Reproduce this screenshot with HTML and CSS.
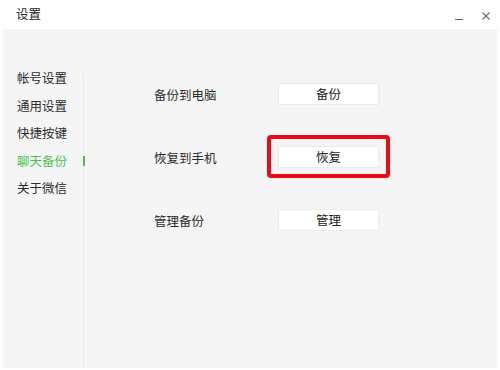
FILE: index.html
```html
<!DOCTYPE html>
<html lang="zh-CN">
<head>
<meta charset="utf-8">
<title>设置</title>
<link rel="stylesheet" href="styles.css">
</head>
<body>
<div class="window">
  <header class="titlebar">
    <span class="title">设置</span>
    <div class="controls">
      <svg class="ctl min" width="10" height="10" viewBox="0 0 10 10"><line x1="1" y1="8.5" x2="9" y2="8.5" stroke="#6a6a6a" stroke-width="1"/></svg>
      <svg class="ctl close" width="10" height="10" viewBox="0 0 10 10"><path d="M1.5 1.5 L8.5 8.5 M8.5 1.5 L1.5 8.5" stroke="#6a6a6a" stroke-width="1.1" fill="none"/></svg>
    </div>
  </header>
  <main class="panel">
    <nav class="sidebar">
      <div class="nav-item">帐号设置</div>
      <div class="nav-item">通用设置</div>
      <div class="nav-item">快捷按键</div>
      <div class="nav-item active">聊天备份<span class="marker"></span></div>
      <div class="nav-item">关于微信</div>
    </nav>
    <div class="divider"></div>
    <section class="content">
      <div class="row">
        <span class="label">备份到电脑</span>
        <span class="btn-wrap"><button class="btn">备份</button></span>
      </div>
      <div class="row">
        <span class="label">恢复到手机</span>
        <span class="btn-wrap highlighted"><button class="btn">恢复</button><span class="redbox"></span></span>
      </div>
      <div class="row">
        <span class="label">管理备份</span>
        <span class="btn-wrap"><button class="btn">管理</button></span>
      </div>
    </section>
  </main>
</div>
</body>
</html>
```

FILE: styles.css
```css
html, body {
  margin: 0;
  padding: 0;
  background: #ffffff;
}
body {
  width: 500px;
  height: 370px;
  overflow: hidden;
  font-family: "Noto Sans CJK SC", "Noto Sans", sans-serif;
  color: #333333;
  font-size: 12.5px;
}
.window {
  display: flex;
  flex-direction: column;
  height: 370px;
}
.titlebar {
  height: 29px;
  display: flex;
  align-items: center;
  justify-content: space-between;
  padding-left: 16px;
  padding-right: 9px;
}
.title {
  font-size: 12.5px;
  color: #222;
  line-height: 1;
  margin-top: -1px;
}
.controls {
  display: flex;
  gap: 17px;
  align-items: center;
  margin-top: 2px;
}
.ctl { display: block; }
.panel {
  margin: 0 3px 2px 3px;
  flex: 1;
  background: #f5f5f5;
  display: flex;
}
.sidebar {
  width: 80px;
  padding-top: 35px;
  box-sizing: border-box;
  padding-left: 14px;
}
.nav-item {
  position: relative;
  height: 27.5px;
  line-height: 27.5px;
  color: #2b2b2b;
  white-space: nowrap;
}
.nav-item.active {
  color: #4cbf55;
}
.marker {
  position: absolute;
  right: -2px;
  top: 9px;
  width: 2px;
  height: 10px;
  background: #4cbf55;
}
.divider {
  width: 1px;
  margin-top: 44px;
  background: #e8e8e8;
  align-self: stretch;
}
.content {
  flex: 1;
  padding-top: 54px;
  padding-left: 70px;
  display: flex;
  flex-direction: column;
  gap: 41px;
}
.row {
  display: flex;
  align-items: center;
  height: 22px;
}
.label {
  width: 124px;
  color: #2b2b2b;
}
.btn-wrap {
  position: relative;
  display: block;
}
.btn {
  display: block;
  width: 101px;
  height: 22px;
  padding: 0;
  margin: 0;
  background: #ffffff;
  border: 1px solid #ebebeb;
  font-family: inherit;
  font-size: 12.5px;
  color: #222;
  line-height: 20px;
}
.redbox {
  position: absolute;
  left: -11px;
  right: -11px;
  top: -11px;
  bottom: -10px;
  border: 4px solid #ec0b14;
  border-radius: 4px;
  box-sizing: border-box;
}
```
